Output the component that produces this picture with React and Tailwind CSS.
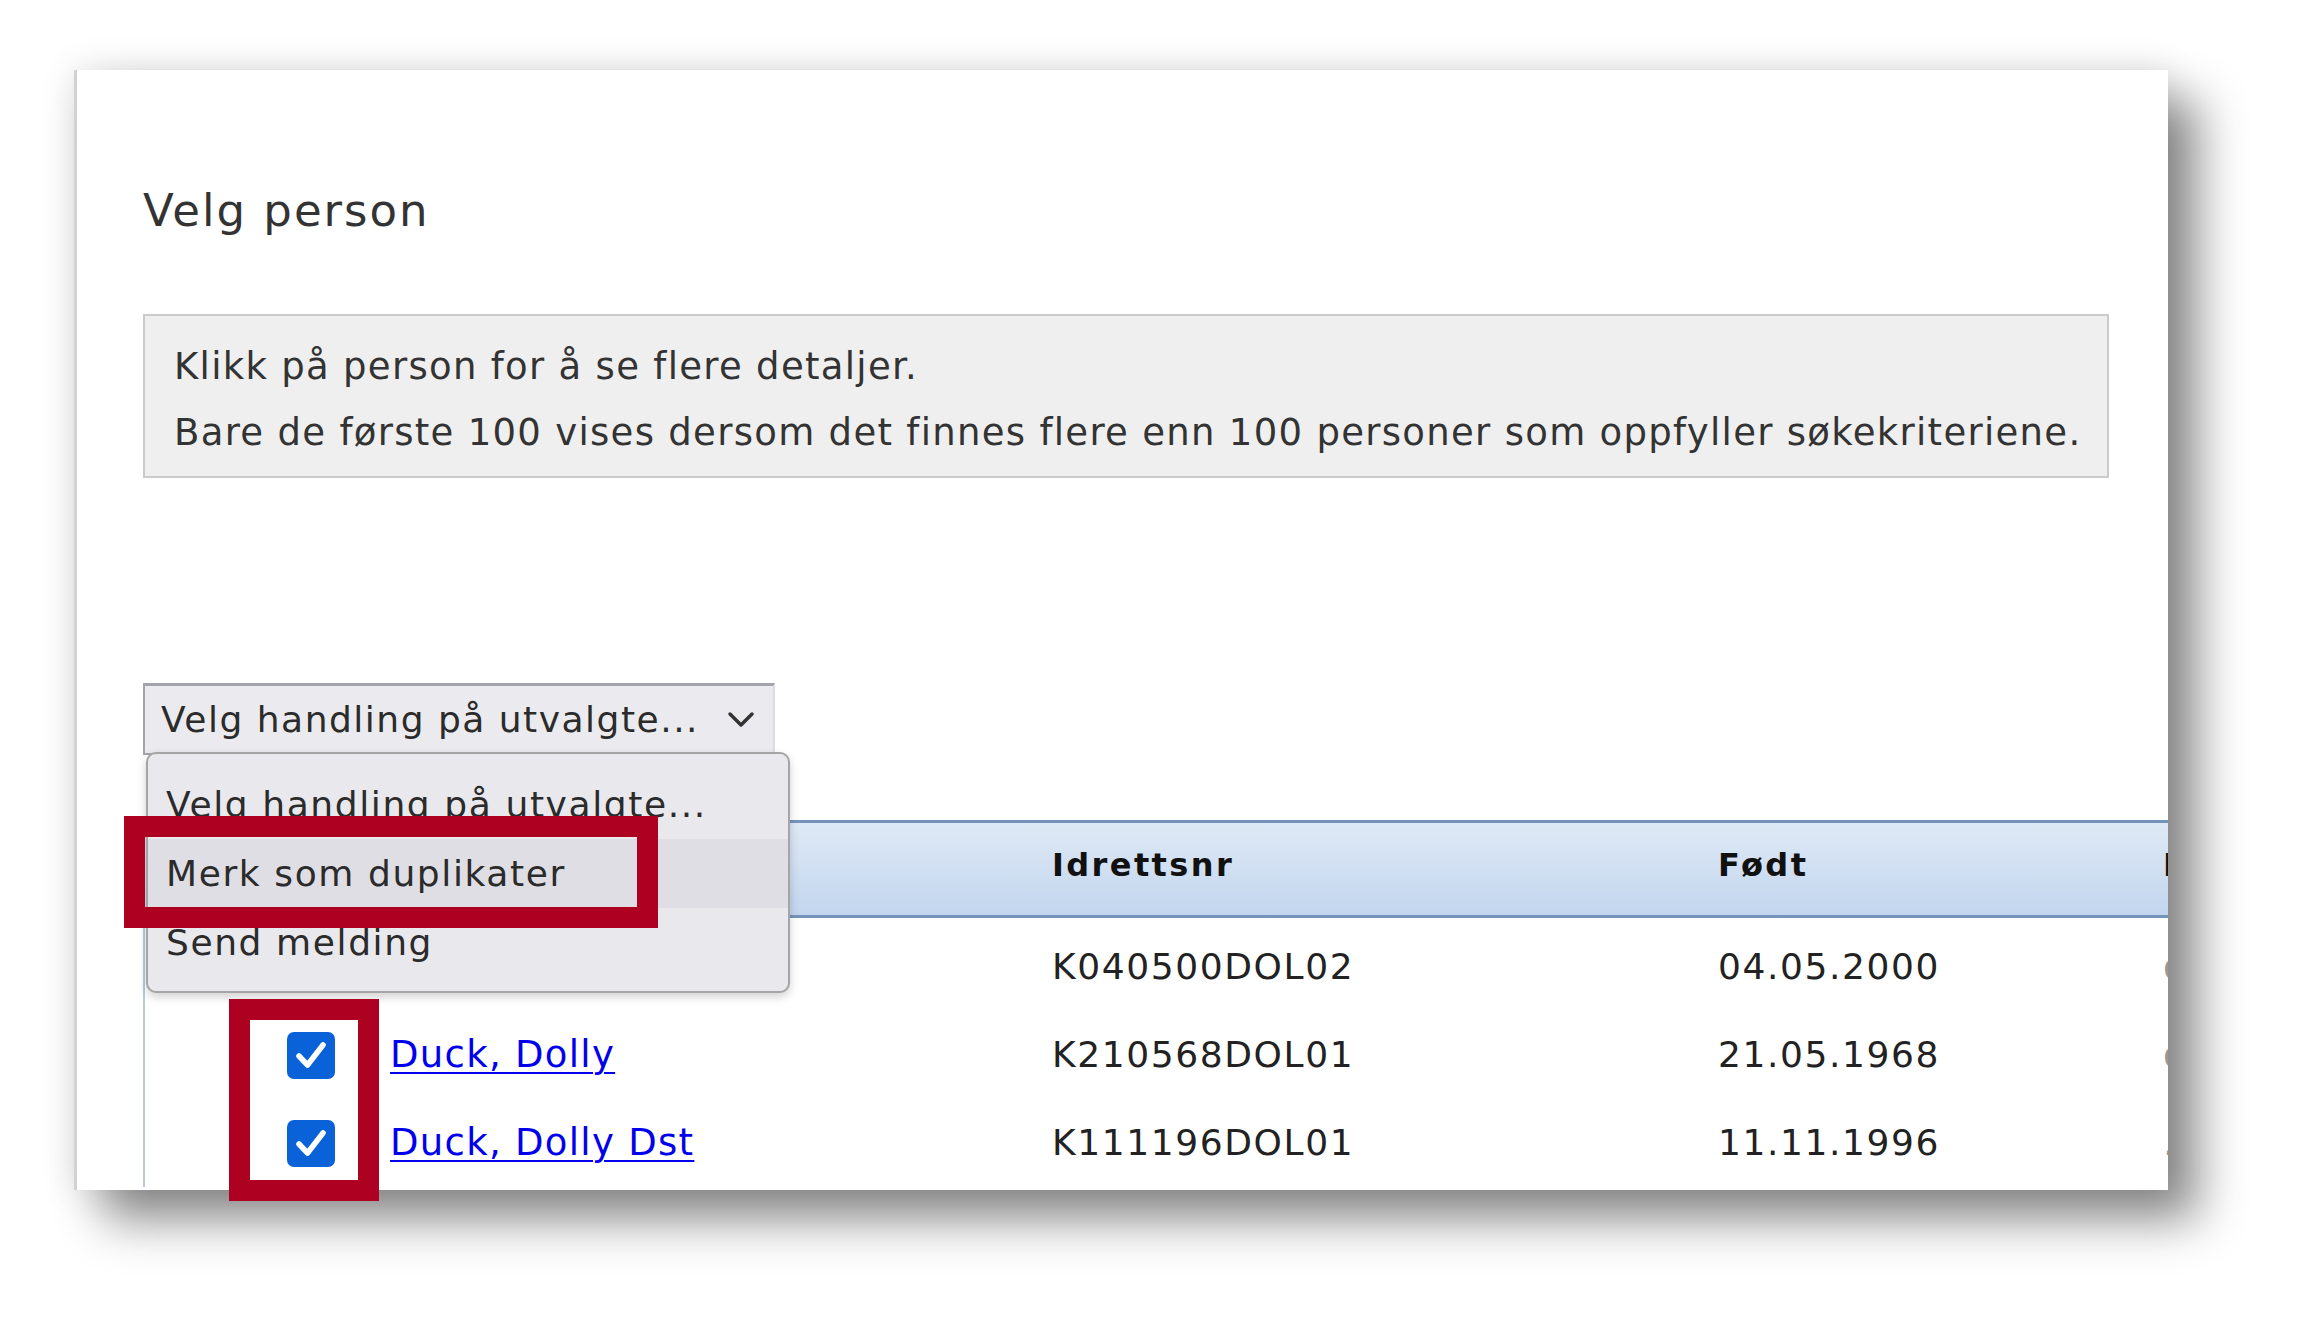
import React from "react";

const rows = [
  { checked: false, name: "Duck, Dolly", id: "K040500DOL02", born: "04.05.2000", extra: "dolly@duck.no" },
  { checked: true, name: "Duck, Dolly", id: "K210568DOL01", born: "21.05.1968", extra: "dolly@duck.no" },
  { checked: true, name: "Duck, Dolly Dst", id: "K111196DOL01", born: "11.11.1996", extra: "." },
];

const cols = "grid grid-cols-[142px_103px_662px_666px_445px_400px]";

const Checkbox = ({ checked }) =>
  checked ? (
    <span className="flex h-[47px] w-[48px] items-center justify-center rounded-[7px] bg-[#0a62d9]">
      <svg width="32" height="30" viewBox="0 0 32 30" fill="none">
        <path
          d="M4 16 L12.5 25 L28 5"
          stroke="#fff"
          strokeWidth="5.5"
          strokeLinecap="round"
          strokeLinejoin="round"
        />
      </svg>
    </span>
  ) : (
    <span className="block h-[47px] w-[48px] rounded-[7px] border-2 border-[#8f8f9d] bg-white" />
  );

export default function App() {
  return (
    <div className="relative h-[1333px] w-[2310px] overflow-hidden bg-white pl-[74px] pt-[70px] font-['DejaVu_Sans',sans-serif] text-[#333]">
      <div className="relative h-[1120px] w-[2094px] overflow-hidden border-l-[3px] border-[#d2d2d2] bg-white pl-[66px] pt-[113px] shadow-[30px_30px_45px_rgba(0,0,0,0.45),0_0_35px_rgba(0,0,0,0.12)]">
        <h1 className="text-[45px] font-normal leading-[55px] tracking-[2px] text-[#333]">
          Velg person
        </h1>

        <div className="mt-[76px] w-[1966px] border-2 border-[#cbcbcb] bg-[#efefef] pb-[10px] pl-[29px] pt-[18px] text-[37px] leading-[66px] tracking-[1.3px] text-[#333]">
          <p>Klikk på person for å se flere detaljer.</p>
          <p>Bare de første 100 vises dersom det finnes flere enn 100 personer som oppfyller søkekriteriene.</p>
        </div>

        <div className="relative z-10 mt-[205px] w-[632px]">
          <div className="flex h-[72px] items-center justify-between border-2 border-t-[3px] border-[#a3a3ab] border-r-[#dcdce0] bg-[#ebebef] pl-[16px] pr-[18px] text-[36px] leading-[44px] tracking-[1.5px] text-[#2b2b2b]">
            <span>Velg handling på utvalgte...</span>
            <svg width="28" height="18" viewBox="0 0 28 18" fill="none">
              <polyline points="3,3 14,14 25,3" stroke="#333" strokeWidth="3.5" strokeLinecap="round" strokeLinejoin="round" />
            </svg>
          </div>

          <div className="absolute left-[3px] top-[69px] h-[241px] w-[644px] rounded-[10px] border-2 border-[#a5a5a5] bg-[#e9e8ed] pb-[10px] pt-[16px] text-[36px] leading-[69px] tracking-[1.6px] text-[#2b2b2b] shadow-[0_4px_10px_rgba(0,0,0,0.18)]">
            <div className="h-[69px] pl-[18px]">Velg handling på utvalgte...</div>
            <div className="h-[69px] bg-[#dfdee4] pl-[18px]">Merk som duplikater</div>
            <div className="h-[69px] pl-[18px]">Send melding</div>
          </div>
        </div>

        <div className="mt-[65px] w-[2100px] border-l-2 border-[#b9c9dc]">
          <div className={`${cols} h-[98px] items-center border-y-[3px] border-[#7594bb] bg-linear-to-b from-[#dfe9f6] to-[#c2d6ee] pb-[8px] text-[32px] font-bold leading-[40px] tracking-[2.4px] text-[#111]`}>
            <span />
            <span />
            <span>Navn</span>
            <span>Idrettsnr</span>
            <span>Født</span>
            <span>Epost</span>
          </div>
          <div className="mt-[5px] text-[36px] leading-[44px] tracking-[1.6px] text-[#222]">
            {rows.map((r) => (
              <div key={r.id} className={`${cols} h-[88px] items-center`}>
                <span />
                <Checkbox checked={r.checked} />
                <a href="#" className="text-[37px] tracking-[1.3px] text-[#0000ee] underline decoration-2 underline-offset-[5px]">
                  {r.name}
                </a>
                <span>{r.id}</span>
                <span>{r.born}</span>
                <span className="text-[#999]">{r.extra}</span>
              </div>
            ))}
          </div>
        </div>
      </div>

      <div className="pointer-events-none absolute left-[124px] top-[816px] z-20 h-[112px] w-[534px] border-[21px] border-[#ae0020]" />
      <div className="pointer-events-none absolute left-[229px] top-[999px] z-20 h-[202px] w-[150px] border-[21px] border-[#ae0020]" />
    </div>
  );
}
